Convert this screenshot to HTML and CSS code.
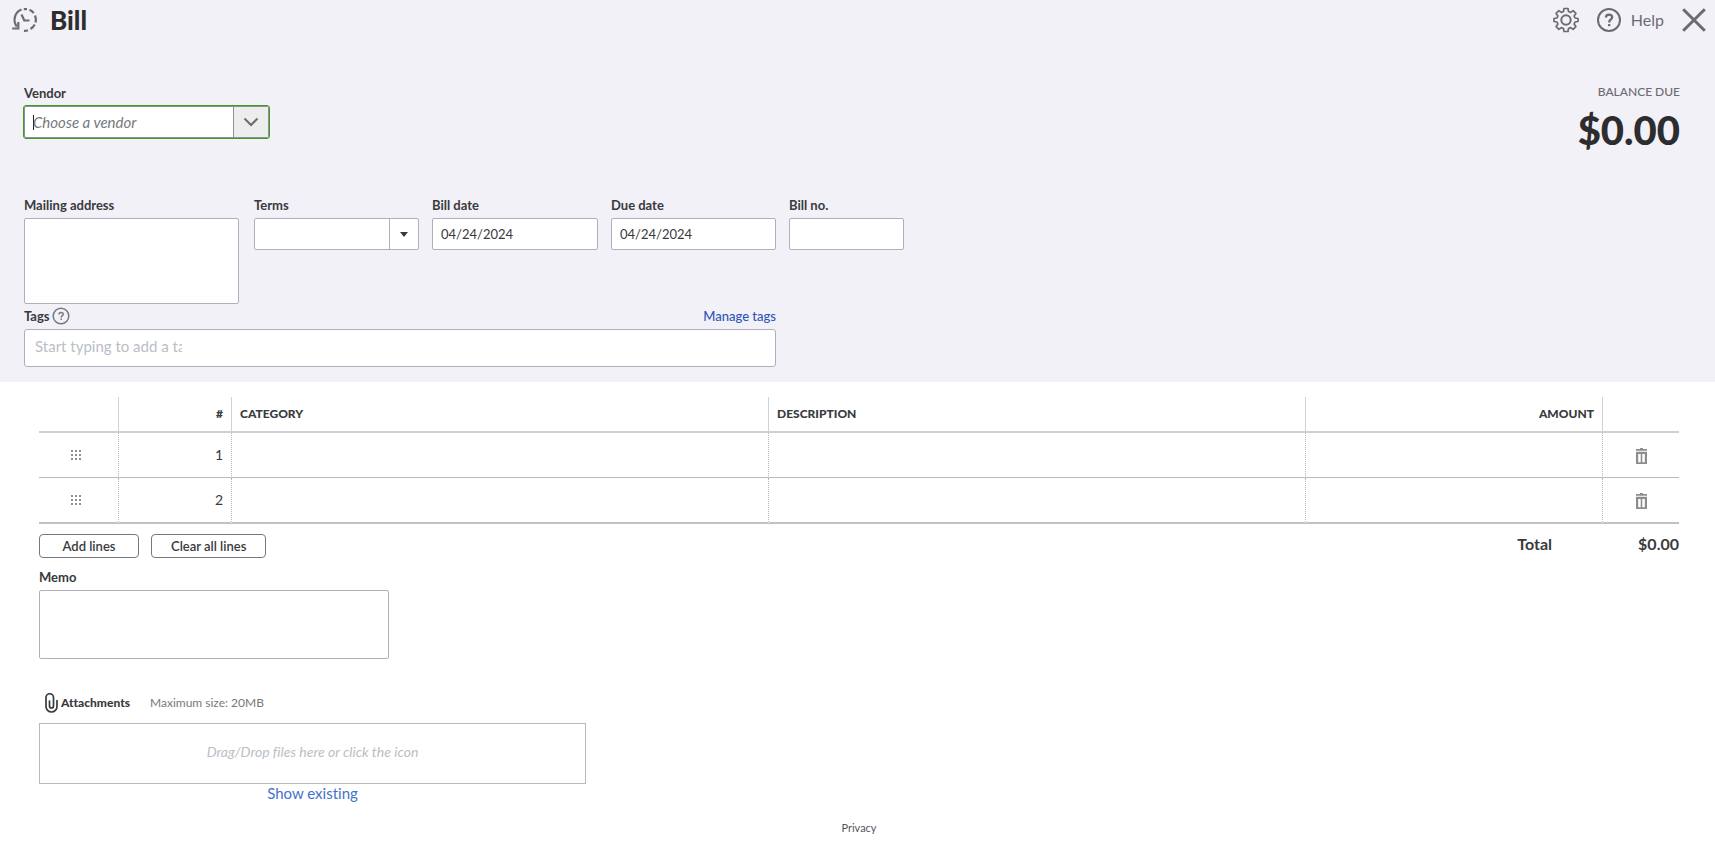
FILE: index.html
```html
<!DOCTYPE html>
<html lang="en">
<head>
<meta charset="utf-8">
<title>Bill</title>
<meta name="viewport" content="width=device-width, initial-scale=1">
<link rel="stylesheet" href="styles.css">
</head>
<body>
<form class="page">
  <div class="head-area">
    <header class="topbar">
      <button type="button" class="icon-btn" aria-label="Recent bills">
        <svg width="26" height="26" viewBox="0 0 26 26" fill="none" stroke="#6b6c72" stroke-width="2.200">
          <path d="M4.800 19.500A11 11 0 0 1 9.500 2.600"/>
          <path d="M11.800 2.100H15"/>
          <path d="M17.500 2.800A11 11 0 0 1 21.700 6"/>
          <path d="M23 8.500A11 11 0 0 1 23.600 15.500"/>
          <path d="M22.700 17.500A11 11 0 0 1 18.500 22"/>
          <path d="M16 23.200A11 11 0 0 1 12 23.800"/>
          <path d="M0.200 21.500H6.300V15"/>
          <path d="M9.500 7.500 12.300 13.500H17.500"/>
        </svg>
      </button>
      <h1 class="title">Bill</h1>
      <div class="tools">
        <button type="button" class="icon-btn" aria-label="Settings">
          <svg width="26" height="26" viewBox="0 0 26 26" fill="none" stroke="#6b6c72" stroke-width="1.700" stroke-linejoin="round">
            <circle cx="13" cy="13" r="4.700" stroke-width="2"/>
            <path d="M11 1.500h4l.5 3 2.100.9 2.500-1.800 2.800 2.800-1.800 2.500.9 2.100 3 .5v3l-3 .5-.9 2.100 1.800 2.500-2.800 2.800-2.500-1.800-2.100.9-.5 3h-4l-.5-3-2.100-.9-2.500 1.800-2.800-2.800 1.800-2.500-.9-2.100-3-.5v-3l3-.5.9-2.100-1.800-2.500 2.800-2.800 2.500 1.800 2.100-.9z"/>
          </svg>
        </button>
        <button type="button" class="icon-btn help">
          <svg width="24" height="24" viewBox="0 0 24 24" fill="none" stroke="#6b6c72" stroke-width="2">
            <circle cx="12" cy="12" r="11"/>
            <path d="M8.900 9.600C8.900 5.600 15.200 5.700 15.200 9.200 15.200 11.500 12.200 11.500 12.200 14.500" stroke-width="2.300"/>
            <path d="M12.200 16v2.200" stroke-width="2.300"/>
          </svg>
          <span>Help</span>
        </button>
        <button type="button" class="icon-btn" aria-label="Close">
          <svg width="24" height="24" viewBox="0 0 24 24" stroke="#6b6c72" stroke-width="3">
            <path d="M1.200 1.200 22.800 22.800M22.800 1.200 1.200 22.800"/>
          </svg>
        </button>
      </div>
    </header>

    <section class="vendor-row">
      <div class="field">
        <label for="vendor">Vendor</label>
        <div class="combo">
          <input id="vendor" class="combo-input" type="text" placeholder="Choose a vendor">
          <button type="button" class="combo-btn" aria-label="Open vendor list">
            <svg width="16" height="10" viewBox="0 0 16 10" fill="none" stroke="#6b6c72" stroke-width="2"><path d="M1.500 1.500 8 8l6.500-6.500"/></svg>
          </button>
        </div>
      </div>
      <div class="balance">
        <div class="balance-label">BALANCE DUE</div>
        <div class="balance-value">$0.00</div>
      </div>
    </section>

    <section class="details">
      <div class="field address">
        <label for="address">Mailing address</label>
        <textarea id="address" class="box"></textarea>
      </div>
      <div class="field">
        <label for="terms">Terms</label>
        <div class="select">
          <select id="terms" class="box"><option></option></select>
          <span class="select-arrow"><svg width="8" height="5" viewBox="0 0 8 5"><path d="M0 0h8L4 5z" fill="#393a3d"/></svg></span>
        </div>
      </div>
      <div class="field">
        <label for="bill-date">Bill date</label>
        <input id="bill-date" class="box" type="text" value="04/24/2024">
      </div>
      <div class="field">
        <label for="due-date">Due date</label>
        <input id="due-date" class="box" type="text" value="04/24/2024">
      </div>
      <div class="field">
        <label for="bill-no">Bill no.</label>
        <input id="bill-no" class="box" type="text">
      </div>
    </section>

    <section class="tags">
      <div class="tags-head">
        <label for="tags">Tags</label>
        <svg width="18" height="18" viewBox="0 0 18 18" fill="none" stroke="#77787d" stroke-width="1.500">
          <circle cx="9" cy="9" r="7.800"/>
          <path d="M7 7.400C7 4.700 11.200 4.800 11.200 7.200 11.200 8.700 9.200 8.700 9.200 10.600M9.200 11.600v1.500"/>
        </svg>
        <a href="#" class="manage">Manage tags</a>
      </div>
      <div class="tags-box">
        <input id="tags" class="tags-input" type="text" placeholder="Start typing to add a tag">
      </div>
    </section>
  </div>

  <main class="content">
    <table class="lines">
      <colgroup><col class="c-drag"><col class="c-num"><col><col><col class="c-amount"><col class="c-del"></colgroup>
      <thead>
        <tr><th></th><th class="right">#</th><th>CATEGORY</th><th>DESCRIPTION</th><th class="right">AMOUNT</th><th></th></tr>
      </thead>
      <tbody>
        <tr>
          <td class="drag"><svg width="10" height="10" viewBox="0 0 10 10" fill="#8d8d8f"><path d="M0 0h2v2H0zM4 0h2v2H4zM8 0h2v2H8zM0 4h2v2H0zM4 4h2v2H4zM8 4h2v2H8zM0 8h2v2H0zM4 8h2v2H4zM8 8h2v2H8z"/></svg></td>
          <td class="right">1</td><td></td><td></td><td></td>
          <td class="del"><button type="button" class="icon-btn" aria-label="Delete line 1"><svg width="11" height="16" viewBox="0 0 11 16" fill="#8d8d8f" fill-rule="evenodd"><path d="M4 0h3v1h4v1.800H0V1h4zM0 3.800h11V16H0zM2.200 6v8.300h2.500V6zM6.300 6v8.300h2.500V6z"/></svg></button></td>
        </tr>
        <tr>
          <td class="drag"><svg width="10" height="10" viewBox="0 0 10 10" fill="#8d8d8f"><path d="M0 0h2v2H0zM4 0h2v2H4zM8 0h2v2H8zM0 4h2v2H0zM4 4h2v2H4zM8 4h2v2H8zM0 8h2v2H0zM4 8h2v2H4zM8 8h2v2H8z"/></svg></td>
          <td class="right">2</td><td></td><td></td><td></td>
          <td class="del"><button type="button" class="icon-btn" aria-label="Delete line 2"><svg width="11" height="16" viewBox="0 0 11 16" fill="#8d8d8f" fill-rule="evenodd"><path d="M4 0h3v1h4v1.800H0V1h4zM0 3.800h11V16H0zM2.200 6v8.300h2.500V6zM6.300 6v8.300h2.500V6z"/></svg></button></td>
        </tr>
      </tbody>
    </table>

    <div class="below">
      <button type="button" class="btn">Add lines</button>
      <button type="button" class="btn">Clear all lines</button>
      <div class="total"><span>Total</span><span>$0.00</span></div>
    </div>

    <div class="field memo">
      <label for="memo">Memo</label>
      <textarea id="memo" class="box"></textarea>
    </div>

    <section class="attachments">
      <div class="attach-head">
        <svg width="13" height="20" viewBox="0 0 13 20" fill="none" stroke="#393a3d" stroke-width="1.700" stroke-linecap="round"><path d="M4.500 8v5a2 2 0 0 0 4 0V4.500a3.700 3.700 0 0 0-7.500 0v9a5.500 5.500 0 0 0 11 0V7.500"/></svg>
        <span class="attach-title">Attachments</span>
        <span class="attach-size">Maximum size: 20MB</span>
      </div>
      <button type="button" class="drop">Drag/Drop files here or click the icon</button>
      <a href="#" class="existing">Show existing</a>
    </section>
  </main>
  <footer class="footer"><a href="#">Privacy</a></footer>
</form>
</body>
</html>
```
FILE: styles.css
```css
* { box-sizing: border-box; }
body {
  margin: 0;
  background: #fff;
  color: #393a3d;
  font: 14px/20px Lato, "Open Sans", sans-serif;
  font-variant-ligatures: none;
}
button, input, select, textarea { font: inherit; color: inherit; margin: 0; }
a { text-decoration: none; color: #2c55b5; }
svg { display: block; flex: none; }
.icon-btn {
  display: inline-flex;
  align-items: center;
  padding: 0;
  border: 0;
  background: none;
}

.head-area { background: #f2f1f7; padding-bottom: 15px; }
.topbar {
  display: flex;
  align-items: center;
  height: 40px;
  padding: 0 9px 0 12px;
}
.title { margin: 0 0 0 12px; font-size: 26px; line-height: 32px; font-weight: 900; color: #2d2d2f; }
.tools { display: flex; align-items: center; gap: 18px; margin-left: auto; }
.help { gap: 10px; font-size: 16px; color: #6b6c72; }

.field { display: flex; flex-direction: column; }
.field label, .tags-head label {
  font-size: 13px;
  line-height: 18px;
  font-weight: 700;
}
.field label { margin-bottom: 4px; }

.vendor-row {
  display: flex;
  justify-content: space-between;
  padding: 44px 35px 0 24px;
}
.combo {
  display: flex;
  width: 245px;
  height: 32px;
  border: 1px solid #8d9096;
  border-radius: 2px;
  outline: 1px solid #3f9c1f;
  background: #fff;
}
.combo-input {
  flex: 1;
  min-width: 0;
  padding: 0 8px;
  border: 0;
  outline: 0;
  font-size: 15px;
  background: linear-gradient(#222, #222) 8px center / 1px 15px no-repeat;
}
.combo-input::placeholder { color: #77787d; font-style: italic; opacity: 1; }
.combo-btn {
  display: flex;
  align-items: center;
  justify-content: center;
  width: 35px;
  padding: 0;
  border: 0;
  border-left: 1px solid #8d9096;
  background: #ededed;
}
.balance { text-align: right; }
.balance-label { font-size: 12px; line-height: 16px; font-weight: 500; color: #6b6c72; }
.balance-value { margin-top: 8px; font-size: 40px; line-height: 44px; font-weight: 900; color: #2d2d2f; }

.details {
  display: grid;
  grid-template-columns: 217px 165px 166px 165px 115px;
  column-gap: 13px;
  align-items: start;
  padding: 44px 24px 0;
}
.address { width: 215px; }
.box {
  width: 100%;
  height: 32px;
  padding: 0 8px;
  border: 1px solid #b0b0bc;
  border-radius: 2px;
  background: #fff;
  font-size: 13px;
  outline: 0;
  resize: none;
}
textarea.box { display: block; height: 86px; }
.select { position: relative; }
.select select { appearance: none; display: block; }
.select-arrow {
  position: absolute;
  top: 1px;
  right: 1px;
  bottom: 1px;
  display: flex;
  align-items: center;
  justify-content: center;
  width: 29px;
  border-left: 1px solid #b0b0bc;
  pointer-events: none;
}

.tags { width: 752px; max-width: 100%; margin: 2px 24px 0; }
.tags-head { display: flex; align-items: center; gap: 2px; height: 20px; margin-bottom: 3px; }
.manage { margin-left: auto; font-size: 13px; font-weight: 500; }
.tags-box {
  height: 38px;
  padding: 0 10px;
  border: 1px solid #b0b0bc;
  border-radius: 3px;
  background: #fff;
}
.tags-input {
  display: block;
  width: 147px;
  height: 32px;
  padding: 0;
  border: 0;
  outline: 0;
  background: none;
  font-size: 15px;
}
.tags-input::placeholder { color: #babec5; opacity: 1; }

.content { padding: 15px 36px 0 39px; }
.lines { width: 100%; border-collapse: separate; border-spacing: 0; table-layout: fixed; }
.c-drag { width: 80px; }
.c-num { width: 113px; }
.c-amount { width: 297px; }
.c-del { width: 76px; }
.lines th, .lines td { padding: 0 8px; text-align: left; }
.lines th {
  height: 36px;
  font-size: 12px;
  font-weight: 900;
  border-right: 1px solid #d0d0d8;
  border-bottom: 2px solid #d0d0d8;
}
.lines td {
  height: 45px;
  border-right: 1px dotted #b9b9b9;
  border-bottom: 1px solid #b9b9b9;
}
.lines tbody tr:last-child td { height: 46px; border-bottom: 2px solid #c1c1c1; }
.lines th:last-child, .lines td:last-child { border-right: 0; }
.lines .right { text-align: right; }
.lines .drag svg { margin: 0 auto 0 24px; }
.lines .del { text-align: center; vertical-align: middle; }
.lines .del .icon-btn { vertical-align: middle; }

.below { display: flex; align-items: flex-start; gap: 12px; padding-top: 10px; }
.btn {
  height: 24px;
  padding: 0 19px;
  min-width: 100px;
  border: 1px solid #77787d;
  border-radius: 4px;
  background: #fff;
  font-size: 13px;
  line-height: 20px;
  font-weight: 600;
}
.total { display: flex; gap: 86px; margin-left: auto; font-size: 16px; font-weight: 700; }
.memo { width: 350px; max-width: 100%; margin-top: 10px; }
.memo textarea.box { height: 69px; }

.attachments { display: flex; flex-direction: column; width: 547px; max-width: 100%; margin-top: 34px; }
.attach-head { display: flex; align-items: center; height: 20px; padding-left: 6px; font-size: 12px; }
.attach-title { margin-left: 3px; font-weight: 900; }
.attach-size { margin-left: 20px; color: #77787d; }
.drop {
  height: 61px;
  margin-top: 10px;
  padding: 0 0 4px;
  border: 1px solid #b9b9b9;
  background: #fff;
  color: #babec5;
  font-style: italic;
}
.existing { align-self: center; font-size: 15px; line-height: 18px; color: #4472cc; }
.footer { padding: 16px 36px 0 39px; text-align: center; font-size: 11px; }
.footer a { color: #55565b; }
```
